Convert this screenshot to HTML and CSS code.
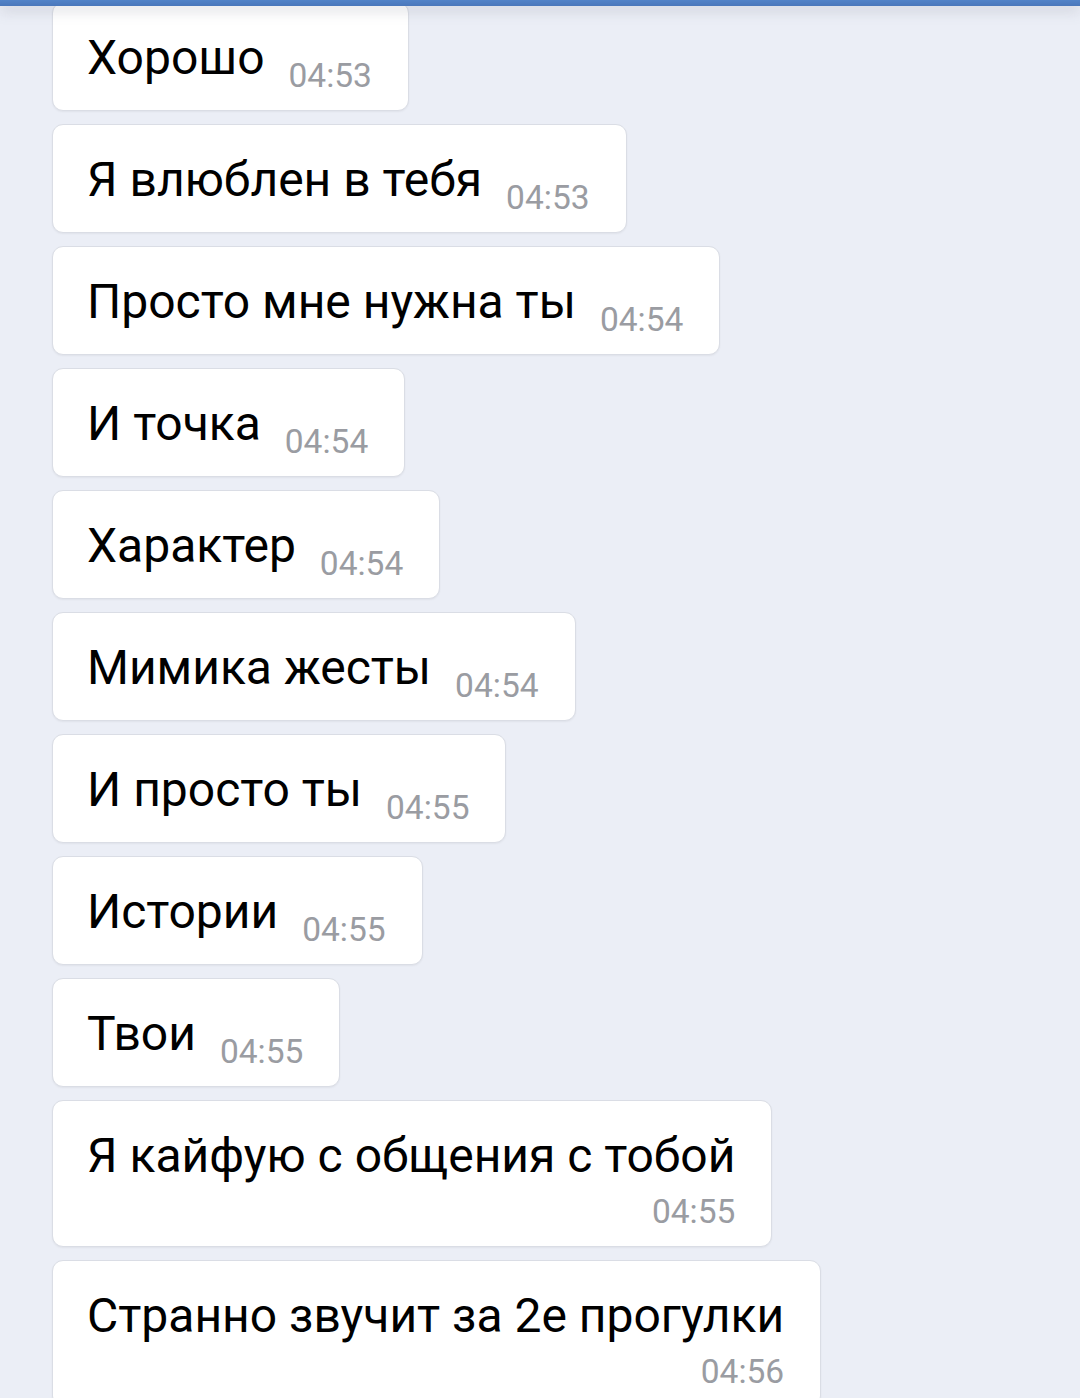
FILE: index.html
```html
<!DOCTYPE html>
<html lang="ru">
<head>
    <meta charset="UTF-8">
    <meta name="viewport" content="width=device-width, initial-scale=1.0">
    <title>Сообщения</title>
    <link rel="stylesheet" href="styles.css">
</head>
<body>
    <div class="topbar"></div>

    <div class="chat">
        <div class="msg">
            <span class="text">Хорошо</span>
            <span class="time">04:53</span>
        </div>
        <div class="msg">
            <span class="text">Я влюблен в тебя</span>
            <span class="time">04:53</span>
        </div>
        <div class="msg">
            <span class="text">Просто мне нужна ты</span>
            <span class="time">04:54</span>
        </div>
        <div class="msg">
            <span class="text">И точка</span>
            <span class="time">04:54</span>
        </div>
        <div class="msg">
            <span class="text">Характер</span>
            <span class="time">04:54</span>
        </div>
        <div class="msg">
            <span class="text">Мимика жесты</span>
            <span class="time">04:54</span>
        </div>
        <div class="msg">
            <span class="text">И просто ты</span>
            <span class="time">04:55</span>
        </div>
        <div class="msg">
            <span class="text">Истории</span>
            <span class="time">04:55</span>
        </div>
        <div class="msg">
            <span class="text">Твои</span>
            <span class="time">04:55</span>
        </div>
        <div class="msg msg-long">
            <span class="text">Я кайфую с общения с тобой</span>
            <span class="time">04:55</span>
        </div>
        <div class="msg msg-long">
            <span class="text">Странно звучит за 2е прогулки</span>
            <span class="time">04:56</span>
        </div>
    </div>
</body>
</html>
```

FILE: styles.css
```css
body {
    margin: 0;
    padding: 0;
    background-color: #ebeef6;
    font-family: Roboto, 'Noto Sans', sans-serif;
    color: #000;
    height: 1398px;
    overflow: hidden;
}

.topbar {
    position: fixed;
    top: 0;
    left: 0;
    right: 0;
    height: 6px;
    background: linear-gradient(to bottom, #5283c8, #4a77bb);
    box-shadow: 0 4px 14px rgba(120, 124, 140, 0.35);
    z-index: 10;
}

.chat {
    display: flex;
    flex-direction: column;
    align-items: flex-start;
    gap: 13px;
    padding: 2px 0 0 52px;
}

.msg {
    display: flex;
    align-items: flex-start;
    background-color: #fff;
    border: 1px solid #dadde5;
    border-radius: 11px;
    box-shadow: 0 1px 2px rgba(0, 0, 0, 0.05);
    padding: 27px 36px 18px 34px;
}

.text {
    font-size: 48px;
    line-height: 56px;
}

.time {
    font-size: 33.5px;
    line-height: 32px;
    color: #9a9ca2;
    margin-top: 30px;
    margin-left: 24px;
}

.msg-long {
    flex-direction: column;
    align-items: flex-end;
}

.msg-long .text {
    align-self: flex-start;
}

.msg-long .time {
    margin-top: 12px;
    margin-left: 0;
}
```
